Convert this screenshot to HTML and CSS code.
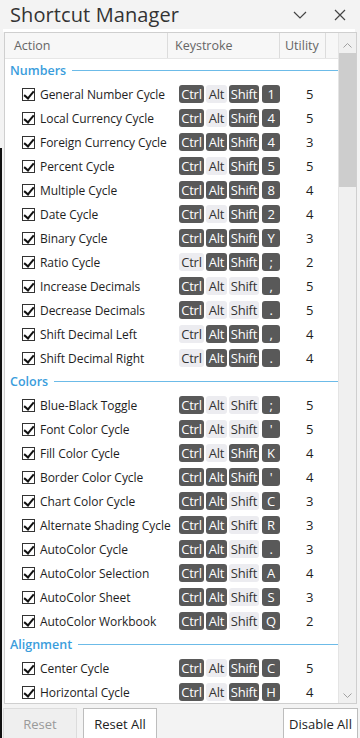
FILE: index.html
```html
<!DOCTYPE html>
<html lang="en">
<head>
  <meta charset="utf-8">
  <title>Shortcut Manager</title>
  <link rel="stylesheet" href="styles.css">
</head>
<body>
  <div class="edge"></div>
  <header class="titlebar">
    <h1>Shortcut Manager</h1>
    <span class="tb-btn"><svg width="14" height="8" viewBox="0 0 14 8"><path d="M1 1l6 6 6-6" fill="none" stroke="#444" stroke-width="1.2"/></svg></span>
    <span class="tb-btn"><svg width="12" height="12" viewBox="0 0 12 12"><path d="M1 1l10 10M11 1L1 11" fill="none" stroke="#444" stroke-width="1.2"/></svg></span>
  </header>
  <div class="strip"></div>
  <div class="list">
    <div class="main">
      <div class="row head">
        <div class="c1">Action</div>
        <div class="c2">Keystroke</div>
        <div class="c3">Utility</div>
        <div class="c4"></div>
      </div>

      <div class="group"><span>Numbers</span></div>
      <div class="row"><div class="c1"><i class="cb"></i>General Number Cycle</div><div class="c2"><b class="k on">Ctrl</b><b class="k">Alt</b><b class="k on">Shift</b><b class="k on x">1</b></div><div class="c3">5</div></div>
      <div class="row"><div class="c1"><i class="cb"></i>Local Currency Cycle</div><div class="c2"><b class="k on">Ctrl</b><b class="k">Alt</b><b class="k on">Shift</b><b class="k on x">4</b></div><div class="c3">5</div></div>
      <div class="row"><div class="c1"><i class="cb"></i>Foreign Currency Cycle</div><div class="c2"><b class="k on">Ctrl</b><b class="k on">Alt</b><b class="k on">Shift</b><b class="k on x">4</b></div><div class="c3">3</div></div>
      <div class="row"><div class="c1"><i class="cb"></i>Percent Cycle</div><div class="c2"><b class="k on">Ctrl</b><b class="k">Alt</b><b class="k on">Shift</b><b class="k on x">5</b></div><div class="c3">5</div></div>
      <div class="row"><div class="c1"><i class="cb"></i>Multiple Cycle</div><div class="c2"><b class="k on">Ctrl</b><b class="k on">Alt</b><b class="k on">Shift</b><b class="k on x">8</b></div><div class="c3">4</div></div>
      <div class="row"><div class="c1"><i class="cb"></i>Date Cycle</div><div class="c2"><b class="k on">Ctrl</b><b class="k">Alt</b><b class="k on">Shift</b><b class="k on x">2</b></div><div class="c3">4</div></div>
      <div class="row"><div class="c1"><i class="cb"></i>Binary Cycle</div><div class="c2"><b class="k on">Ctrl</b><b class="k on">Alt</b><b class="k on">Shift</b><b class="k on x">Y</b></div><div class="c3">3</div></div>
      <div class="row"><div class="c1"><i class="cb"></i>Ratio Cycle</div><div class="c2"><b class="k">Ctrl</b><b class="k on">Alt</b><b class="k on">Shift</b><b class="k on x">;</b></div><div class="c3">2</div></div>
      <div class="row"><div class="c1"><i class="cb"></i>Increase Decimals</div><div class="c2"><b class="k on">Ctrl</b><b class="k">Alt</b><b class="k">Shift</b><b class="k on x">,</b></div><div class="c3">5</div></div>
      <div class="row"><div class="c1"><i class="cb"></i>Decrease Decimals</div><div class="c2"><b class="k on">Ctrl</b><b class="k">Alt</b><b class="k">Shift</b><b class="k on x">.</b></div><div class="c3">5</div></div>
      <div class="row"><div class="c1"><i class="cb"></i>Shift Decimal Left</div><div class="c2"><b class="k">Ctrl</b><b class="k on">Alt</b><b class="k on">Shift</b><b class="k on x">,</b></div><div class="c3">4</div></div>
      <div class="row"><div class="c1"><i class="cb"></i>Shift Decimal Right</div><div class="c2"><b class="k">Ctrl</b><b class="k on">Alt</b><b class="k on">Shift</b><b class="k on x">.</b></div><div class="c3">4</div></div>

      <div class="group"><span>Colors</span></div>
      <div class="row"><div class="c1"><i class="cb"></i>Blue-Black Toggle</div><div class="c2"><b class="k on">Ctrl</b><b class="k">Alt</b><b class="k">Shift</b><b class="k on x">;</b></div><div class="c3">5</div></div>
      <div class="row"><div class="c1"><i class="cb"></i>Font Color Cycle</div><div class="c2"><b class="k on">Ctrl</b><b class="k">Alt</b><b class="k">Shift</b><b class="k on x">'</b></div><div class="c3">5</div></div>
      <div class="row"><div class="c1"><i class="cb"></i>Fill Color Cycle</div><div class="c2"><b class="k on">Ctrl</b><b class="k">Alt</b><b class="k on">Shift</b><b class="k on x">K</b></div><div class="c3">4</div></div>
      <div class="row"><div class="c1"><i class="cb"></i>Border Color Cycle</div><div class="c2"><b class="k on">Ctrl</b><b class="k on">Alt</b><b class="k on">Shift</b><b class="k on x">'</b></div><div class="c3">4</div></div>
      <div class="row"><div class="c1"><i class="cb"></i>Chart Color Cycle</div><div class="c2"><b class="k on">Ctrl</b><b class="k on">Alt</b><b class="k">Shift</b><b class="k on x">C</b></div><div class="c3">3</div></div>
      <div class="row"><div class="c1"><i class="cb"></i>Alternate Shading Cycle</div><div class="c2"><b class="k on">Ctrl</b><b class="k on">Alt</b><b class="k">Shift</b><b class="k on x">R</b></div><div class="c3">3</div></div>
      <div class="row"><div class="c1"><i class="cb"></i>AutoColor Cycle</div><div class="c2"><b class="k on">Ctrl</b><b class="k on">Alt</b><b class="k">Shift</b><b class="k on x">.</b></div><div class="c3">3</div></div>
      <div class="row"><div class="c1"><i class="cb"></i>AutoColor Selection</div><div class="c2"><b class="k on">Ctrl</b><b class="k on">Alt</b><b class="k">Shift</b><b class="k on x">A</b></div><div class="c3">4</div></div>
      <div class="row"><div class="c1"><i class="cb"></i>AutoColor Sheet</div><div class="c2"><b class="k on">Ctrl</b><b class="k on">Alt</b><b class="k">Shift</b><b class="k on x">S</b></div><div class="c3">3</div></div>
      <div class="row"><div class="c1"><i class="cb"></i>AutoColor Workbook</div><div class="c2"><b class="k on">Ctrl</b><b class="k on">Alt</b><b class="k">Shift</b><b class="k on x">Q</b></div><div class="c3">2</div></div>

      <div class="group"><span>Alignment</span></div>
      <div class="row"><div class="c1"><i class="cb"></i>Center Cycle</div><div class="c2"><b class="k on">Ctrl</b><b class="k">Alt</b><b class="k on">Shift</b><b class="k on x">C</b></div><div class="c3">5</div></div>
      <div class="row"><div class="c1"><i class="cb"></i>Horizontal Cycle</div><div class="c2"><b class="k on">Ctrl</b><b class="k">Alt</b><b class="k on">Shift</b><b class="k on x">H</b></div><div class="c3">4</div></div>
    </div>
    <div class="scroll">
      <span class="arrow"><svg width="9" height="5" viewBox="0 0 9 5"><path d="M0.5 4.5l4-4 4 4" fill="none" stroke="#a0a0a0"/></svg></span>
      <span class="thumb"></span>
      <span class="track"></span>
      <span class="arrow"><svg width="9" height="5" viewBox="0 0 9 5"><path d="M0.5 0.5l4 4 4-4" fill="none" stroke="#a0a0a0"/></svg></span>
    </div>
  </div>
  <footer class="buttons">
    <button class="btn off">Reset</button>
    <button class="btn">Reset All</button>
    <span class="spacer"></span>
    <button class="btn wide">Disable All</button>
  </footer>
</body>
</html>
```

FILE: styles.css
```css
body { margin: 0; width: 360px; height: 738px; overflow: hidden; background: #f3f3f3; font-family: "Open Sans", "Noto Sans", sans-serif; color: #222; position: relative; }
.edge { position: absolute; left: 0; top: 148px; width: 2px; height: 590px; background: #111; }

.titlebar { display: flex; align-items: center; height: 29px; padding: 0 0 0 10px; }
.titlebar h1 { flex: 1; margin: 0; font-size: 20px; font-weight: 400; color: #333; letter-spacing: 0.1px; }
.tb-btn { width: 40px; display: flex; justify-content: center; }

.strip { height: 3px; margin: 0 5px 0 3px; background: #fff; }

.list { display: flex; height: 670px; margin: 0 3px 0 4px; border: 1px solid #cfcfcf; background: #fff; }
.main { width: 333px; overflow: hidden; }

.row { display: grid; grid-template-columns: 163px 112px 46px 12px; height: 24px; align-items: center; font-size: 12px; color: #1e1e1e; }
.row .c1 { display: flex; align-items: center; padding-left: 17px; white-space: nowrap; letter-spacing: -0.05px; }
.row .c2 { display: flex; gap: 2px; padding-left: 11px; }
.row .c3 { padding-left: 26px; font-size: 13px; }

.head { height: 25px; background: #f7f7f7; color: #666; border-bottom: 1px solid #e6e6e6; font-size: 12.5px; }
.head > div { height: 100%; display: flex; align-items: center; border-right: 1px solid #dcdcdc; }
.head .c1 { padding-left: 9px; }
.head .c2 { padding-left: 7px; }
.head .c3 { padding-left: 5px; font-size: 12.5px; }
.head .c4 { border-right: 0; }

.group { display: flex; align-items: center; gap: 6px; height: 23px; padding-left: 5px; font-size: 12.5px; font-weight: 600; color: #3a9ddc; }
.group::after { content: ""; flex: 1; height: 1px; background: #6cbbe8; }

.cb { flex-shrink: 0; width: 13px; height: 13px; box-sizing: border-box; border: 1px solid #333; margin-right: 5px; position: relative; background: #fff; }
.cb::after { content: ""; position: absolute; left: 3px; top: 0px; width: 4px; height: 8px; border: solid #111; border-width: 0 2px 2px 0; transform: rotate(40deg); }

.k { display: inline-block; height: 18px; line-height: 18px; border-radius: 3px; background: #ececf0; color: #333; font-weight: 400; text-align: center; font-size: 13px; letter-spacing: -0.2px; }
.k:nth-child(1) { width: 25px; }
.k:nth-child(2) { width: 21px; }
.k:nth-child(3) { width: 30px; }
.k.x { width: 18px; margin-left: 1px; }
.k.on { background: #595959; color: #fff; }

.scroll { width: 17px; display: flex; flex-direction: column; background: #f0f0f0; border-left: 1px solid #e4e4e4; padding-top: 4px; }
.arrow { height: 16px; display: flex; align-items: center; justify-content: center; }
.thumb { height: 134px; background: #cdcdcd; }
.track { flex: 1; }

.buttons { display: flex; gap: 6px; padding: 4px 2px 0 3px; }
.btn { height: 32px; width: 74px; border: 1px solid #bdbdbd; background: #fff; font-family: inherit; font-size: 13px; color: #222; padding: 0; }
.btn.wide { width: 75px; }
.btn.off { background: #efefef; border-color: #dcdcdc; color: #9a9a9a; }
.spacer { flex: 1; }
```
